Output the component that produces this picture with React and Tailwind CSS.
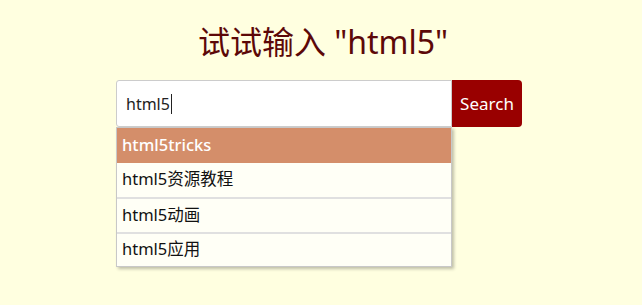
import { useState } from 'react'

const suggestions = ['html5tricks', 'html5资源教程', 'html5动画', 'html5应用']

export default function App() {
  const [query, setQuery] = useState('html5')
  const [active, setActive] = useState(0)

  return (
    <div
      className="min-h-[305px] w-full bg-[#ffffe0] pt-[20px]"
      style={{ fontFamily: '"Noto Sans", "Noto Sans CJK SC", sans-serif' }}
    >
      <h1 className="pl-[4px] text-center text-[32px] leading-[44px] text-[#5c0808]">
        试试输入 "html5"
      </h1>

      <div className="mx-auto mt-[16px] w-[410px]">
        <div className="flex h-[47px] w-[406px]">
          <div className="flex flex-1 items-center rounded-l-[3px] border border-[#cccccc] bg-white pl-[9px] text-[16px] text-[#222]">
            <span>{query}</span>
            <span className="ml-[1px] h-[20px] w-[1px] bg-[#222]" />
          </div>
          <button
            onClick={() => setQuery('html5')}
            className="w-[70px] rounded-r-[4px] bg-[#990000] text-[17px] text-white"
          >
            Search
          </button>
        </div>

        <ul className="w-[336px] border border-[#c8c8c8] shadow-[2px_2px_3px_rgba(0,0,0,0.25)]">
          {suggestions.map((s, i) => (
            <li
              key={s}
              onMouseEnter={() => setActive(i)}
              className={`flex h-[34.5px] items-center px-[5px] text-[16.5px] ${
                i === active
                  ? 'bg-[#d48e6a] font-medium text-white'
                  : 'bg-[#fffff6] text-[#111]'
              } ${i > 1 ? 'border-t-2 border-[#e0e0e0]' : ''}`}
            >
              {s}
            </li>
          ))}
        </ul>
      </div>
    </div>
  )
}
